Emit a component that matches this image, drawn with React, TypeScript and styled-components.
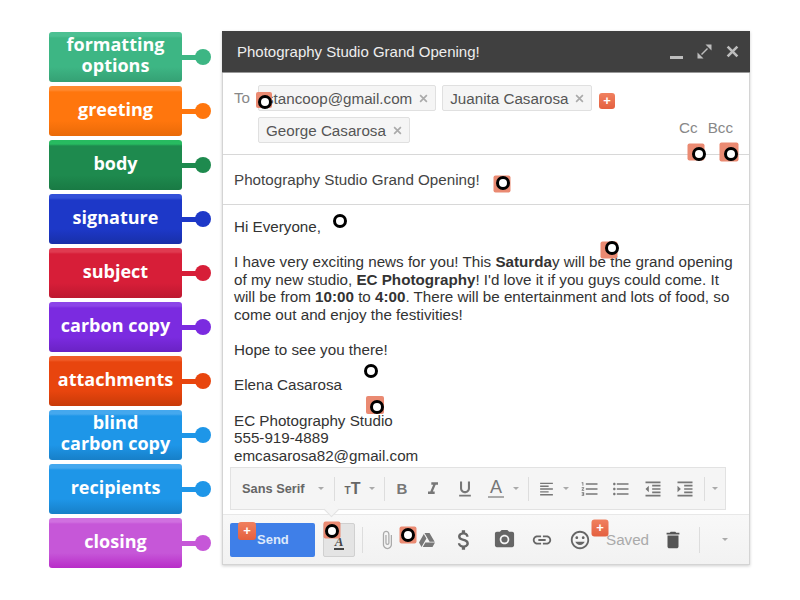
import React from 'react';
import styled, { createGlobalStyle } from 'styled-components';
import {
  MdAttachFile,
  MdAttachMoney,
  MdDelete,
  MdFormatAlignLeft,
  MdFormatIndentDecrease,
  MdFormatIndentIncrease,
  MdFormatItalic,
  MdFormatListBulleted,
  MdFormatListNumbered,
  MdFormatUnderlined,
  MdInsertEmoticon,
  MdLink,
  MdPhotoCamera,
} from 'react-icons/md';
import { FaGoogleDrive } from 'react-icons/fa';

const Global = createGlobalStyle`
  html, body { margin: 0; padding: 0; background: #fff; }
  body { font-family: "Liberation Sans", Arial, sans-serif; }
`;

const Page = styled.div`
  width: 800px;
  height: 600px;
  display: flex;
  padding: 31px 0 0 49px;
  box-sizing: border-box;
  overflow: hidden;
`;

const Legend = styled.div`
  width: 173px;
  display: flex;
  flex-direction: column;
  gap: 4px;
  padding-top: 1px;
`;

const LegendRow = styled.div<{ $c: string }>`
  display: flex;
  align-items: center;
  color: ${(p) => p.$c};
`;

const Label = styled.div<{ $c: string; $top: string; $bottom: string }>`
  width: 133px;
  height: 50px;
  box-sizing: border-box;
  border-radius: 3px;
  background: linear-gradient(
    ${(p) => p.$top} 0,
    ${(p) => p.$top} 4px,
    ${(p) => p.$c} 6px,
    ${(p) => p.$c} 70%,
    ${(p) => p.$bottom} 100%
  );
  color: #fff;
  font: 700 18px/21px "Open Sans", sans-serif;
  text-align: center;
  display: flex;
  align-items: center;
  justify-content: center;
  padding-bottom: 4px;
  white-space: pre-line;
`;

const Connector = styled.div`
  width: 14px;
  height: 5px;
  background: currentColor;
`;

const Dot = styled.div`
  width: 16px;
  height: 16px;
  margin-left: -1px;
  border-radius: 50%;
  background: currentColor;
`;

const Compose = styled.div`
  position: relative;
  width: 528px;
  height: 534px;
  box-sizing: border-box;
  border: 1px solid #d4d4d4;
  border-top: 0;
  box-shadow: 0 1px 3px rgba(0, 0, 0, 0.2);
  display: flex;
  flex-direction: column;
`;

const TitleBar = styled.div`
  height: 42px;
  flex: none;
  margin: 0 -1px;
  background: #404040;
  color: #eee;
  font-size: 15px;
  display: flex;
  align-items: center;
  padding: 0 11px 0 15px;
  border-bottom: 1px solid #999;
  box-sizing: border-box;
`;

const TitleText = styled.div`
  flex: 1;
`;

const WindowIcons = styled.div`
  display: flex;
  align-items: center;
  gap: 14px;
  color: #bdbdbd;
`;

const MinimizeBar = styled.div`
  width: 13px;
  height: 3px;
  background: #bdbdbd;
  margin-top: 11px;
`;

const Recipients = styled.div`
  height: 82px;
  flex: none;
  box-sizing: border-box;
  border-bottom: 1px solid #d8d8d8;
  padding: 12px 11px 0 11px;
  display: grid;
  grid-template-columns: 24px 1fr;
  position: relative;
`;

const ToLabel = styled.div`
  color: #888;
  font-size: 15.2px;
  line-height: 26px;
`;

const Chips = styled.div`
  display: flex;
  flex-wrap: wrap;
  gap: 6px;
  align-content: flex-start;
`;

const Chip = styled.div`
  height: 26px;
  box-sizing: border-box;
  border: 1px solid #e0e0e0;
  border-radius: 2px;
  background: #f5f5f5;
  color: #555;
  font-size: 15.2px;
  display: flex;
  align-items: center;
  padding: 0 7px;
  gap: 7px;
`;

const CopyLinks = styled.div`
  position: absolute;
  right: 16px;
  top: 46px;
  display: flex;
  gap: 10px;
  color: #888;
  font-size: 15.2px;
`;

const Subject = styled.div`
  height: 50px;
  flex: none;
  box-sizing: border-box;
  border-bottom: 1px solid #d8d8d8;
  padding-left: 11px;
  font-size: 15.2px;
  color: #444;
  display: flex;
  align-items: center;
`;

const Body = styled.div`
  flex: 1;
  padding: 13px 11px 0;
  color: #333;
  font-size: 15.2px;
  line-height: 17.6px;
  display: flex;
  flex-direction: column;
`;

const Para = styled.p`
  margin: 0 0 17.6px;
`;

const FormatBar = styled.div`
  position: absolute;
  left: 7px;
  top: 436px;
  width: 496px;
  height: 43px;
  box-sizing: border-box;
  border: 1px solid #e2e2e2;
  background: #f5f5f5;
  display: flex;
  align-items: center;
  padding-left: 1px;
  color: #777;

  &::after {
    content: '';
    position: absolute;
    left: 95px;
    bottom: -6px;
    width: 10px;
    height: 10px;
    background: #f5f5f5;
    border-right: 1px solid #e2e2e2;
    border-bottom: 1px solid #e2e2e2;
    transform: rotate(45deg);
  }
`;

const FontName = styled.div`
  width: 82px;
  flex: none;
  padding-left: 10px;
  box-sizing: border-box;
  font-size: 12.8px;
  font-weight: 700;
  color: #666;
`;

const Cell = styled.div<{ $w: number }>`
  width: ${(p) => p.$w}px;
  flex: none;
  display: flex;
  align-items: center;
  justify-content: center;
  font-size: 20px;
`;

const Caret = styled.span`
  flex: none;
  width: 0;
  height: 0;
  border-left: 3px solid transparent;
  border-right: 3px solid transparent;
  border-top: 3px solid #aaa;
`;

const CaretCell = styled.div<{ $w: number }>`
  width: ${(p) => p.$w}px;
  flex: none;
  display: flex;
  justify-content: center;
`;

const Divider = styled.div<{ $h: number; $m: number }>`
  flex: none;
  width: 1px;
  height: ${(p) => p.$h}px;
  margin: 0 ${(p) => p.$m}px;
  background: #ddd;
`;

const BoldGlyph = styled.span`
  font: 700 15px "Liberation Sans", sans-serif;
  color: #777;
`;

const SizeGlyph = styled.span`
  font: 700 16px "Liberation Sans", sans-serif;
  color: #666;
  display: flex;
  align-items: baseline;
`;

const SmallT = styled.span`
  font-size: 10px;
`;

const ColorA = styled.span`
  font-size: 18px;
  line-height: 17px;
  color: #777;
  border-bottom: 2px solid #aaa;
  padding: 0 2px;
`;

const BottomBar = styled.div`
  height: 50px;
  flex: none;
  box-sizing: border-box;
  border-top: 1px solid #e8e8e8;
  background: linear-gradient(#f8f8f8, #f2f2f2);
  display: flex;
  align-items: center;
  padding-left: 7px;
  color: #666;
`;

const Send = styled.div`
  width: 85px;
  height: 34px;
  flex: none;
  border-radius: 2px;
  background: #3f7fe8;
  color: #dce8fb;
  font-size: 13px;
  font-weight: 700;
  display: flex;
  align-items: center;
  padding-left: 27px;
  box-sizing: border-box;
  margin-right: 8px;
`;

const FormatToggle = styled.div`
  width: 32px;
  height: 34px;
  flex: none;
  box-sizing: border-box;
  border: 1px solid #d0d0d0;
  border-radius: 2px;
  background: #e4e4e4;
  display: flex;
  align-items: flex-end;
  justify-content: center;
  padding-bottom: 6px;
`;

const ToggleGlyph = styled.span`
  font: italic 700 13px/13px "Liberation Serif", serif;
  color: #444;
  border-bottom: 2px solid #444;
  padding: 0 1px;
`;

const Saved = styled.span`
  width: 56px;
  flex: none;
  color: #aaa;
  font-size: 15.2px;
`;

const Marker = styled.div<{ $x: number; $y: number }>`
  position: absolute;
  left: ${(p) => p.$x - 222}px;
  top: ${(p) => p.$y - 31}px;
  box-sizing: border-box;
  transform: translate(-50%, -50%);
`;

const Hotspot = styled(Marker)<{ $s: number }>`
  width: ${(p) => p.$s}px;
  height: ${(p) => p.$s}px;
  border-radius: 2px;
  background: #ea8a72;
`;

const Ring = styled(Marker)`
  width: 14px;
  height: 14px;
  border: 3px solid #000;
  border-radius: 50%;
  background: #fff;
`;

const Plus = styled(Marker)<{ $s: number }>`
  width: ${(p) => p.$s}px;
  height: ${(p) => p.$s}px;
  border-radius: 3px;
  background: linear-gradient(#f0805f, #e4603f);
  color: #fff;
  font-size: 13px;
  font-weight: 700;
  line-height: ${(p) => p.$s - 1}px;
  text-align: center;
`;

const CrossMark = ({ size, width, color }: { size: number; width: number; color: string }) => (
  <svg width={size} height={size} viewBox="0 0 12 12" stroke={color} strokeWidth={width} fill="none">
    <path d="M1.5 1.5L10.5 10.5M10.5 1.5L1.5 10.5" />
  </svg>
);

const ExpandMark = () => (
  <svg width={15} height={15} viewBox="0 0 15 15" fill="#bdbdbd" stroke="none">
    <path d="M8.5 0.5H14.5V6.5Z" />
    <path d="M0.5 8.5V14.5H6.5Z" />
    <path d="M4 10L10 4L11 5L5 11Z" />
  </svg>
);

const labels = [
  { text: 'formatting\noptions', c: '#3db684', top: '#4cc092', bottom: '#35a074' },
  { text: 'greeting', c: '#ff760d', top: '#ff8a30', bottom: '#e96a08' },
  { text: 'body', c: '#1e8a4e', top: '#27bb60', bottom: '#197a44' },
  { text: 'signature', c: '#1d38c8', top: '#3350d8', bottom: '#182fa8' },
  { text: 'subject', c: '#d71e38', top: '#e03a50', bottom: '#bd1830' },
  { text: 'carbon copy', c: '#7b2be0', top: '#8c45e8', bottom: '#6a22c4' },
  { text: 'attachments', c: '#e8450e', top: '#f05c28', bottom: '#c83a08' },
  { text: 'blind\ncarbon copy', c: '#1e96e8', top: '#45a8ee', bottom: '#177fc8' },
  { text: 'recipients', c: '#1e96e8', top: '#45a8ee', bottom: '#177fc8' },
  { text: 'closing', c: '#c657d8', top: '#d070e0', bottom: '#b82cc8' },
];

const hotspots = [
  [263, 100, 16],
  [695, 152, 17],
  [728, 152, 19],
  [501, 184, 17],
  [608, 250, 17],
  [374, 405, 18],
  [331, 530, 17],
  [407, 535, 17],
];

const rings = [
  [264, 102],
  [698, 154],
  [730, 154],
  [502, 183],
  [339, 221],
  [611, 248],
  [370, 371],
  [376, 407],
  [331, 531],
  [407, 535],
];

const pluses = [
  [606, 101, 16],
  [246, 531, 18],
  [599, 528, 17],
];

export default function App() {
  return (
    <Page>
      <Global />
      <Legend>
        {labels.map((l) => (
          <LegendRow key={l.text} $c={l.c}>
            <Label $c={l.c} $top={l.top} $bottom={l.bottom}>
              {l.text}
            </Label>
            <Connector />
            <Dot />
          </LegendRow>
        ))}
      </Legend>
      <Compose>
        <TitleBar>
          <TitleText>Photography Studio Grand Opening!</TitleText>
          <WindowIcons>
            <MinimizeBar />
            <ExpandMark />
            <CrossMark size={13} width={2.4} color="#bdbdbd" />
          </WindowIcons>
        </TitleBar>
        <Recipients>
          <ToLabel>To</ToLabel>
          <Chips>
            <Chip>
              stancoop@gmail.com <CrossMark size={9} width={2.2} color="#aaa" />
            </Chip>
            <Chip>
              Juanita Casarosa <CrossMark size={9} width={2.2} color="#aaa" />
            </Chip>
            <Chip>
              George Casarosa <CrossMark size={9} width={2.2} color="#aaa" />
            </Chip>
          </Chips>
          <CopyLinks>
            <span>Cc</span>
            <span>Bcc</span>
          </CopyLinks>
        </Recipients>
        <Subject>Photography Studio Grand Opening!</Subject>
        <Body>
          <Para>Hi Everyone,</Para>
          <Para>
            I have very exciting news for you! This <b>Saturda</b>y will be the grand opening of my new
            studio, <b>EC Photography</b>! I'd love it if you guys could come. It will be from{' '}
            <b>10:00</b> to <b>4:00</b>. There will be entertainment and lots of food, so come out and
            enjoy the festivities!
          </Para>
          <Para>Hope to see you there!</Para>
          <Para>Elena Casarosa</Para>
          <div>EC Photography Studio</div>
          <div>555-919-4889</div>
          <div>emcasarosa82@gmail.com</div>
        </Body>
        <FormatBar>
          <FontName>Sans Serif</FontName>
          <CaretCell $w={14}>
            <Caret />
          </CaretCell>
          <Divider $h={24} $m={6} />
          <Cell $w={23}>
            <SizeGlyph>
              <SmallT>T</SmallT>T
            </SizeGlyph>
          </Cell>
          <CaretCell $w={16}>
            <Caret />
          </CaretCell>
          <Divider $h={24} $m={4} />
          <Cell $w={26}>
            <BoldGlyph>B</BoldGlyph>
          </Cell>
          <Cell $w={36}>
            <MdFormatItalic />
          </Cell>
          <Cell $w={28}>
            <MdFormatUnderlined />
          </Cell>
          <Cell $w={34}>
            <ColorA>A</ColorA>
          </Cell>
          <CaretCell $w={6}>
            <Caret />
          </CaretCell>
          <Divider $h={24} $m={9} />
          <Cell $w={17}>
            <MdFormatAlignLeft />
          </Cell>
          <CaretCell $w={22}>
            <Caret />
          </CaretCell>
          <Cell $w={26}>
            <MdFormatListNumbered />
          </Cell>
          <Cell $w={36}>
            <MdFormatListBulleted />
          </Cell>
          <Cell $w={28}>
            <MdFormatIndentDecrease />
          </Cell>
          <Cell $w={36}>
            <MdFormatIndentIncrease />
          </Cell>
          <Divider $h={24} $m={1} />
          <CaretCell $w={18}>
            <Caret />
          </CaretCell>
        </FormatBar>
        <BottomBar>
          <Send>Send</Send>
          <FormatToggle>
            <ToggleGlyph>A</ToggleGlyph>
          </FormatToggle>
          <Divider $h={26} $m={7} />
          <Cell $w={34}>
            <MdAttachFile size={20} color="#aaa" />
          </Cell>
          <Cell $w={46}>
            <FaGoogleDrive size={16} color="#777" />
          </Cell>
          <Cell $w={28}>
            <MdAttachMoney size={26} />
          </Cell>
          <Cell $w={52}>
            <MdPhotoCamera size={23} />
          </Cell>
          <Cell $w={24}>
            <MdLink size={22} />
          </Cell>
          <Cell $w={52}>
            <MdInsertEmoticon size={22} />
          </Cell>
          <Saved>Saved</Saved>
          <Cell $w={22}>
            <MdDelete size={24} color="#555" />
          </Cell>
          <Divider $h={26} $m={15} />
          <CaretCell $w={20}>
            <Caret />
          </CaretCell>
        </BottomBar>
        {hotspots.map(([x, y, s]) => (
          <Hotspot key={`${x}-${y}`} $x={x} $y={y} $s={s} />
        ))}
        {rings.map(([x, y]) => (
          <Ring key={`${x}-${y}`} $x={x} $y={y} />
        ))}
        {pluses.map(([x, y, s]) => (
          <Plus key={`${x}-${y}`} $x={x} $y={y} $s={s}>
            +
          </Plus>
        ))}
      </Compose>
    </Page>
  );
}
